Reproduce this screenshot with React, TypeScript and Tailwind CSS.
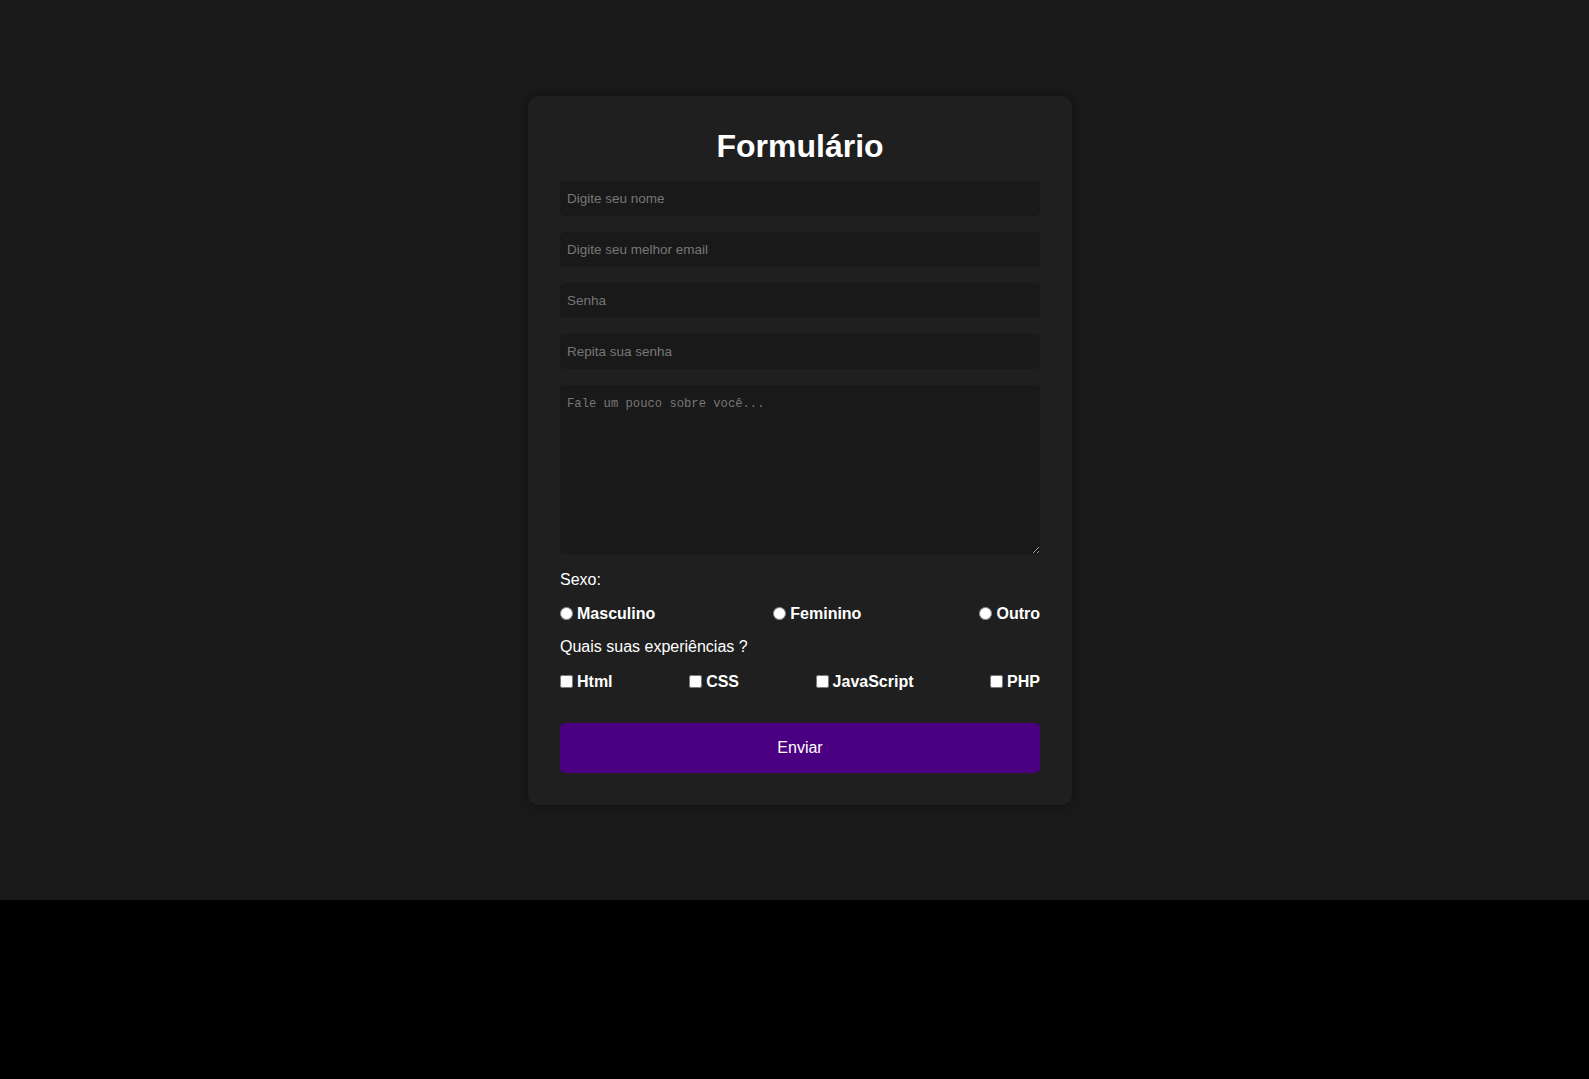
import { useState } from "react";

const sexos = ["Masculino", "Feminino", "Outro"];
const experiencias = ["Html", "CSS", "JavaScript", "PHP"];

export default function App() {
  const [sexo, setSexo] = useState("");

  return (
    <div className="min-h-screen bg-black font-['Liberation_Sans',Arial,sans-serif]">
      <section className="h-[900px] bg-[#1a1a1a] flex items-center justify-center pl-[11px]">
        <form
          className="w-[544px] p-8 rounded-[10px] bg-[#1f1f1f] shadow-[0_0_12px_rgba(0,0,0,0.45)] flex flex-col"
          onSubmit={e => e.preventDefault()}
        >
          <h1 className="text-[32px] leading-[37px] font-bold text-white text-center mb-4">
            Formulário
          </h1>

          {["Digite seu nome", "Digite seu melhor email", "Senha", "Repita sua senha"].map(ph => (
            <input
              key={ph}
              type={ph.includes("enha") ? "password" : "text"}
              placeholder={ph}
              className="h-[35px] mb-4 px-[7px] rounded-[5px] bg-[#191919] text-white text-[13.5px] outline-none placeholder:text-[#777]"
            />
          ))}

          <textarea
            placeholder="Fale um pouco sobre você..."
            className="h-[169px] px-[7px] pt-[12px] pb-2 rounded-[5px] bg-[#191919] text-white text-[12.2px] leading-[15px] font-['Liberation_Mono',monospace] outline-none placeholder:text-[#777]"
          />

          <p className="mt-[17px] text-white text-base leading-[18px]">Sexo:</p>
          <div className="mt-4 flex justify-between items-center text-white text-base leading-[18px] font-bold">
            {sexos.map(s => (
              <label key={s} className="flex items-center gap-1">
                <input
                  type="radio"
                  name="sexo"
                  checked={sexo === s}
                  onChange={() => setSexo(s)}
                  className="w-[13px] h-[13px]"
                />
                {s}
              </label>
            ))}
          </div>

          <p className="mt-[15px] text-white text-base leading-[18px]">Quais suas experiências ?</p>
          <div className="mt-[17px] flex justify-between items-center text-white text-base leading-[18px] font-bold">
            {experiencias.map(x => (
              <label key={x} className="flex items-center gap-1">
                <input type="checkbox" className="w-[13px] h-[13px]" />
                {x}
              </label>
            ))}
          </div>

          <button
            type="submit"
            className="mt-[32px] h-[50px] rounded-[5px] bg-[#4b0082] text-white text-base"
          >
            Enviar
          </button>
        </form>
      </section>
    </div>
  );
}
